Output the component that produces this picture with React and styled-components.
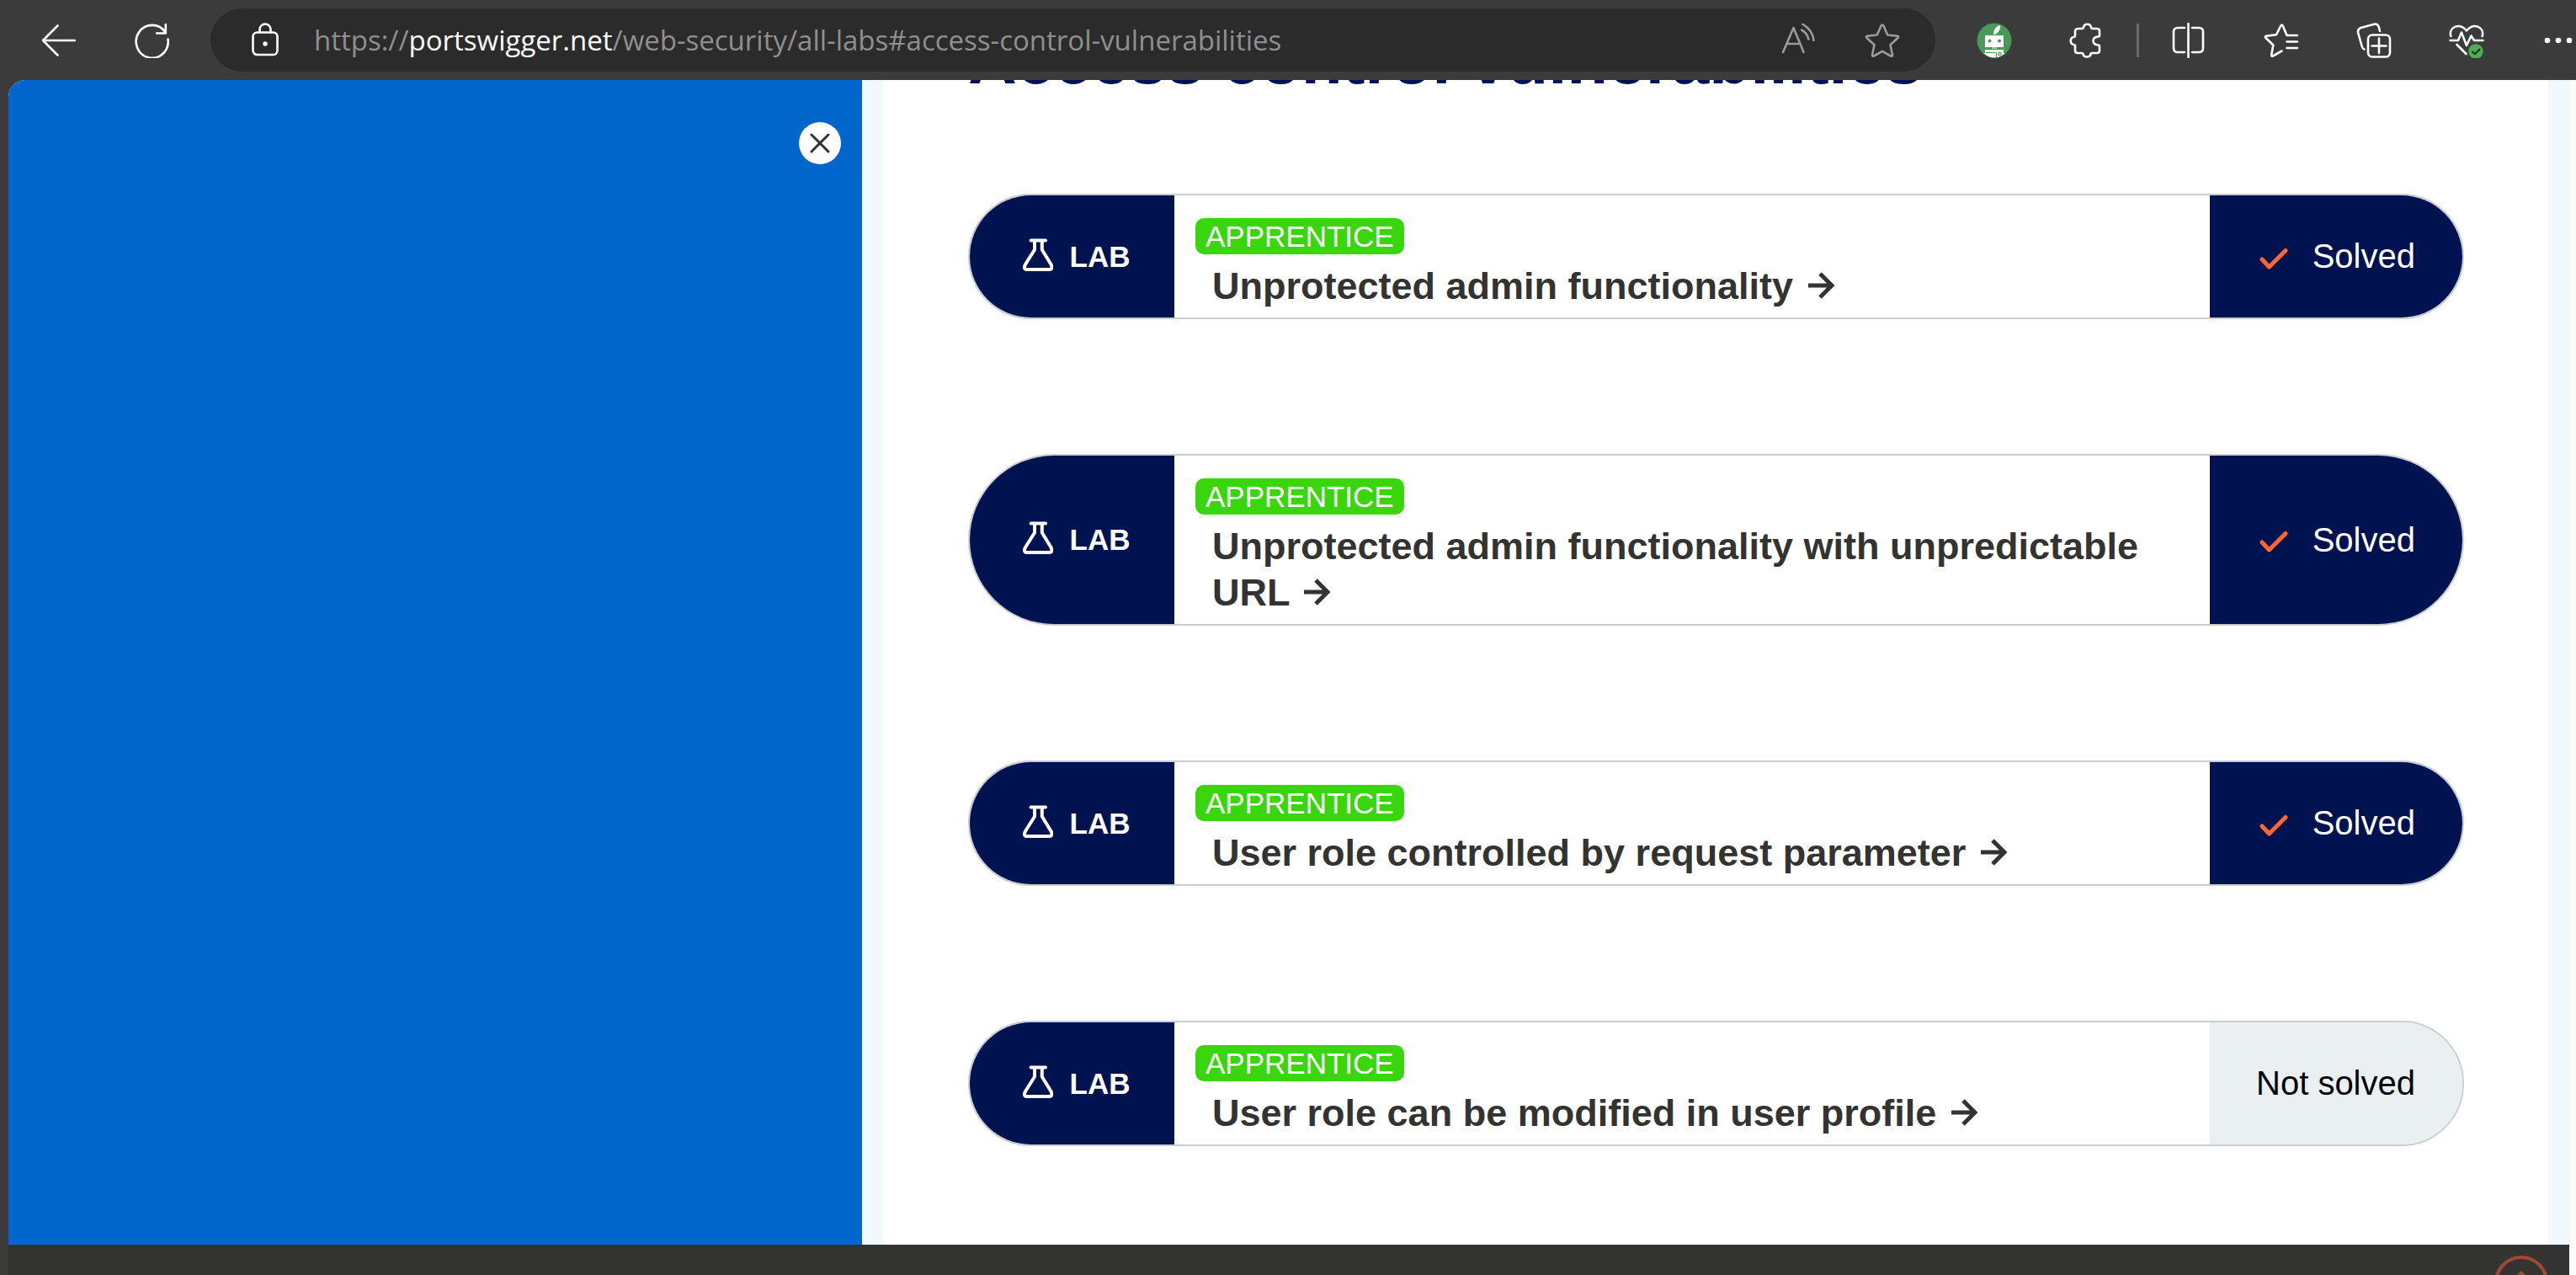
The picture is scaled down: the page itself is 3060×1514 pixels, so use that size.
import React from "react";
import styled, { createGlobalStyle } from "styled-components";

const Global = createGlobalStyle`
  *, *::before, *::after { box-sizing: border-box; }
  html, body, #root { height: 100%; margin: 0; }
  body { background: #3b3b3b; font-family: "Liberation Sans", Arial, sans-serif; overflow: hidden; }
  button, input { font: inherit; color: inherit; border: 0; padding: 0; margin: 0; background: none; }
  h2, h3, ul { margin: 0; padding: 0; list-style: none; }
`;

const Window = styled.div`
  height: 100vh;
  display: flex;
  flex-direction: column;
  overflow: hidden;
`;

const Toolbar = styled.header`
  flex: none;
  display: flex;
  align-items: center;
  padding: 10px 0 10px 15px;
  background: #3b3b3b;
  color: #fff;
`;

const ToolButton = styled.button`
  flex: none;
  width: ${(p) => p.$width || 110}px;
  height: 75px;
  display: flex;
  align-items: center;
  justify-content: ${(p) => (p.$end ? "flex-end" : "center")};
  padding-right: ${(p) => (p.$end ? 4 : 0)}px;
  color: ${(p) => (p.$muted ? "#9a9a9a" : "#fff")};
`;

const Divider = styled.span`
  width: 3px;
  height: 40px;
  margin: 0 4px;
  background: #6b6b6b;
`;

const AddressBar = styled.div`
  flex: 1;
  min-width: 0;
  height: 75px;
  margin: 0 15px;
  padding: 0 13px 0 15px;
  display: flex;
  align-items: center;
  border-radius: 38px;
  background: #2b2b2b;
`;

const Address = styled.a`
  flex: 1;
  min-width: 0;
  display: flex;
  padding-left: 8px;
  white-space: nowrap;
  font-family: "Open Sans", "Noto Sans", sans-serif;
  font-size: 33px;
  line-height: 48px;
  text-decoration: none;
`;

const AddressPart = styled.span`
  color: ${(p) => (p.$host ? "#fff" : "#8f8f8f")};
`;

const Svg = styled.svg`
  display: block;
  flex: none;
  fill: none;
  stroke: currentColor;
  stroke-width: ${(p) => p.$stroke || 2.6};
  stroke-linecap: ${(p) => (p.$sharp ? "butt" : "round")};
  stroke-linejoin: ${(p) => (p.$sharp ? "miter" : "round")};
`;

const Viewport = styled.div`
  flex: 1;
  min-height: 0;
  margin-left: 10px;
  border-right: 8px solid #fbfbfb;
  display: flex;
  flex-direction: column;
  overflow: hidden;
  border-top-left-radius: 20px;
  background: #f0f9fc;
`;

const Content = styled.div`
  flex: 1;
  min-height: 0;
  display: flex;
`;

const SideMenu = styled.aside`
  flex: none;
  width: calc(100% / 3);
  display: flex;
  justify-content: flex-end;
  align-items: flex-start;
  padding: 50px 25px;
  background: #0066cc;
`;

const CloseButton = styled.button`
  width: 50px;
  height: 50px;
  display: flex;
  align-items: center;
  justify-content: center;
  border-radius: 50%;
  background: #fff;
  color: #333332;
`;

const Page = styled.main`
  flex: 1;
  display: flex;
  flex-direction: column;
  justify-content: flex-end;
  min-width: 0;
  margin: 0 25px;
  padding: 0 100px 117px 101px;
  background: #fff;
`;

const Heading = styled.h2`
  margin-bottom: 112px;
  font-size: 80px;
  line-height: 92px;
  color: #00124f;
`;

const LabList = styled.ul`
  display: flex;
  flex-direction: column;
  gap: 160px;
`;

const LabCard = styled.li`
  display: flex;
  border: 2px solid #c8cfcf;
  border-radius: 102px;
  overflow: hidden;
  background: #fff;
`;

const LabType = styled.div`
  flex: none;
  width: 243px;
  display: flex;
  align-items: center;
  justify-content: center;
  gap: 20px;
  padding-left: 10px;
  background: #00124f;
  color: #fff;
  font-size: 35px;
  font-weight: 700;
`;

const LabBody = styled.div`
  flex: 1;
  min-width: 0;
  padding: 27px 25px 10px;
`;

const Level = styled.span`
  display: block;
  width: fit-content;
  padding: 0 12px;
  border-radius: 10px;
  background: #39d60c;
  color: #fff;
  font-size: 35px;
  line-height: 43px;
`;

const LabTitle = styled.h3`
  padding: 10px 20px 0;
  font-size: 45px;
  line-height: 55px;
`;

const LabLink = styled.a`
  color: #333332;
  text-decoration: none;

  svg {
    display: inline-block;
    margin-left: 5px;
  }
`;

const Status = styled.div`
  flex: none;
  width: 300px;
  display: flex;
  align-items: center;
  justify-content: flex-end;
  gap: 29px;
  padding-right: 56px;
  background: ${(p) => (p.$solved ? "#00124f" : "#eaeff2")};
  color: ${(p) => (p.$solved ? "#fff" : "#000")};
  font-size: 40px;
`;

const Footer = styled.footer`
  flex: none;
  height: 36px;
  padding: 13px 25px 0;
  display: flex;
  justify-content: flex-end;
  align-items: flex-start;
  overflow: hidden;
  background: #333332;
`;

const TopButton = styled.button`
  flex: none;
  width: 64px;
  height: 64px;
  display: flex;
  align-items: flex-start;
  justify-content: center;
  padding-top: 14px;
  border: 4px solid #9c4a31;
  border-radius: 50%;
  color: #9c4a31;
`;

const BackIcon = () => (
  <Svg width="42" height="42" viewBox="0 0 42 42" aria-hidden="true">
    <path d="M19.500 3.500 L2 21 L19.500 38.500 M2 21 H40" />
  </Svg>
);

const ReloadIcon = () => (
  <Svg width="42" height="42" viewBox="0 0 42 42" aria-hidden="true">
    <path d="M40.500 19.500 A19 19.500 0 1 1 37.500 11.500 M37.800 2 V12.500 H27" />
  </Svg>
);

const LockIcon = () => (
  <Svg width="32" height="42" viewBox="0 0 32 42" aria-hidden="true">
    <rect x="1.500" y="11.500" width="29" height="26.500" rx="5" />
    <path d="M9.500 11.500 V8 a6.500 6.500 0 0 1 13 0 V11.500" />
    <circle cx="16" cy="25" r="1.400" fill="currentColor" />
  </Svg>
);

const ReadAloudIcon = () => (
  <Svg width="40" height="42" viewBox="0 0 40 42" aria-hidden="true">
    <path d="M2 35 L14.500 6 L26.500 35 M6.500 25 H22.500 M24 8.500 C28 10.500 31 14 32.300 19.500 M25.500 1.800 C32 5.500 37.500 12 38.500 21" />
  </Svg>
);

const StarIcon = () => (
  <Svg width="42" height="42" viewBox="0 0 42 42" aria-hidden="true">
    <path d="M21 2.500 q-1 0 -1.500 1.200 L14.800 14.500 L3 15.800 Q1 16.300 2.500 18 L11.500 26.300 L9 38.200 Q9 40.500 11 39.500 L21 33.800 L31 39.500 Q33 40.500 33 38.200 L30.500 26.300 L39.500 18 Q41 16.300 39 15.800 L27.200 14.500 L22.500 3.700 Q22 2.500 21 2.500 Z" />
  </Svg>
);

const RobotIcon = () => (
  <Svg width="42" height="42" viewBox="0 0 42 42" aria-hidden="true">
    <circle cx="21" cy="21" r="20.500" fill="#48995a" stroke="none" />
    <path d="M20 14 C20 8 23 4 28 3 C29 8 25 12 22 14 Z" fill="#fff" stroke="none" />
    <rect x="10" y="15" width="22" height="14" fill="#fff" stroke="none" />
    <rect x="18" y="29" width="6" height="2" fill="#9acca5" stroke="none" />
    <path d="M8 36 H10 V32 H32 V36 H34 Q28 41.500 21 41.500 Q14 41.500 8 36 Z" fill="#fff" stroke="none" />
    <circle cx="15.500" cy="21.500" r="2" fill="#48995a" stroke="none" />
    <circle cx="27" cy="21.500" r="2" fill="#48995a" stroke="none" />
    <path d="M11 35.500 H22 M23.500 35.500 V41" stroke="#48995a" strokeWidth="1.200" />
    <circle cx="27.500" cy="37" r="1.600" stroke="#48995a" strokeWidth="1.200" />
  </Svg>
);

const PuzzleIcon = () => (
  <Svg width="42" height="42" viewBox="0 0 42 42" aria-hidden="true">
    <path d="M11 7 H15.500 Q17 7 17 5.500 Q17.500 1.800 21.500 1.800 Q25.500 1.800 26 5.500 Q26 7 27.500 7 H33 Q36 7 36 10 V15 Q36 16.500 34.500 16.500 Q28.500 17 28.500 21.500 Q28.500 26 34.500 26.500 Q36 26.500 36 28 V33 Q36 36 33 36 H27 Q25.500 36 25.500 37.500 Q25 40.500 21 40.500 Q17 40.500 16.500 37.500 Q16.500 36 15 36 H10 Q7 36 7 33 V27.500 Q7 26 5.500 26 Q1.800 25.500 1.800 21.500 Q1.800 17.500 5.500 17 Q7 17 7 15.500 V10 Q7 7 11 7 Z" />
  </Svg>
);

const SplitIcon = () => (
  <Svg width="42" height="42" viewBox="0 0 42 42" aria-hidden="true">
    <path d="M16 6 H8 Q3 6 3 11 V30 Q3 35 8 35 H16 M25 6 H33 Q38 6 38 11 V30 Q38 35 33 35 H25 M20.500 1 V41" />
  </Svg>
);

const FavoritesIcon = () => (
  <Svg width="42" height="42" viewBox="0 0 42 42" aria-hidden="true">
    <path d="M40 15 H27.500 L22.800 3.700 Q21.500 1.500 20.200 3.700 L15 14.300 L3 15.800 Q1 16.500 2.500 18 L11.300 26.500 L9.200 38.200 Q9 40.500 11 39.500 L21.500 33.500 M27.500 22.500 H40 M27.500 30 H40" />
  </Svg>
);

const CollectionsIcon = () => (
  <Svg width="42" height="42" viewBox="0 0 42 42" aria-hidden="true">
    <rect x="14" y="14.500" width="26" height="26" rx="5" />
    <path d="M27 18.500 V36 M18.500 27.500 H35.500 M9.500 31.500 Q7.500 31 6.800 28.500 L2.200 12 Q1.200 7.500 5.500 6 L21 1.800 Q25.500 1 26.800 5 L28 10" />
  </Svg>
);

const HealthIcon = () => (
  <Svg width="42" height="42" viewBox="0 0 42 42" aria-hidden="true">
    <path d="M2.300 16 C-0.500 5.500 12 -1 21 9.500 C30 -1 42.500 5.500 39.700 16 M1.500 21 H11 L15 11.500 L21 27 L26.500 15.500 L30 21 H40.500 M9.500 26 L20.500 37" />
    <circle cx="32" cy="34" r="8.700" fill="#4caf50" stroke="none" />
    <path d="M28 34.500 L31 37.300 L36.500 31.500" stroke="#2b2b2b" strokeWidth="2" />
  </Svg>
);

const MoreIcon = () => (
  <Svg width="34" height="8" viewBox="0 0 34 8" aria-hidden="true">
    <g fill="currentColor" stroke="none">
      <circle cx="4" cy="4" r="3.300" />
      <circle cx="17" cy="4" r="3.300" />
      <circle cx="30" cy="4" r="3.300" />
    </g>
  </Svg>
);

const FlaskIcon = () => (
  <Svg width="36" height="44" viewBox="0 0 36 44" $stroke={4} aria-hidden="true">
    <path d="M9.500 2.500 H27 M14 3 V13.500 L3 31 C1 35 2 37 5 37 H31.500 C34.500 37 35.500 35 33.500 31 L22.800 13.500 V3" />
  </Svg>
);

const CheckIcon = () => (
  <Svg width="34" height="30" viewBox="0 0 34 30" $stroke={5} aria-hidden="true">
    <path d="M3 18 L11.500 27 L31 7.500" stroke="#ff6633" />
  </Svg>
);

const ArrowIcon = () => (
  <Svg width="32" height="32" viewBox="0 0 32 32" $stroke={5} $sharp aria-hidden="true">
    <path d="M0 16 H27 M14 2 L28 16 L14 30" />
  </Svg>
);

const CloseIcon = () => (
  <Svg width="24" height="24" viewBox="0 0 24 24" $stroke={3} aria-hidden="true">
    <path d="M2 2 L22 22 M22 2 L2 22" />
  </Svg>
);

const labs = [
  { title: "Unprotected admin functionality", solved: true },
  { title: "Unprotected admin functionality with unpredictable URL", solved: true },
  { title: "User role controlled by request parameter", solved: true },
  { title: "User role can be modified in user profile", solved: false },
];

const tools = [
  { label: "Split screen", Icon: SplitIcon },
  { label: "Favorites", Icon: FavoritesIcon },
  { label: "Collections", Icon: CollectionsIcon },
  { label: "Browser essentials", Icon: HealthIcon },
];

function BrowserToolbar() {
  return (
    <Toolbar>
      <ToolButton aria-label="Back"><BackIcon /></ToolButton>
      <ToolButton aria-label="Refresh"><ReloadIcon /></ToolButton>
      <AddressBar>
        <ToolButton $width={100} aria-label="View site information"><LockIcon /></ToolButton>
        <Address href="#access-control-vulnerabilities">
          <AddressPart>https://</AddressPart>
          <AddressPart $host>portswigger.net</AddressPart>
          <AddressPart>/web-security/all-labs#access-control-vulnerabilities</AddressPart>
        </Address>
        <ToolButton $width={100} $muted aria-label="Read aloud"><ReadAloudIcon /></ToolButton>
        <ToolButton $width={100} $muted aria-label="Add to favorites"><StarIcon /></ToolButton>
      </AddressBar>
      <ToolButton aria-label="Robot extension"><RobotIcon /></ToolButton>
      <ToolButton aria-label="Extensions"><PuzzleIcon /></ToolButton>
      <Divider />
      {tools.map(({ label, Icon }) => (
        <ToolButton key={label} aria-label={label}><Icon /></ToolButton>
      ))}
      <ToolButton $width={75} $end aria-label="More"><MoreIcon /></ToolButton>
    </Toolbar>
  );
}

function Lab({ title, solved }) {
  return (
    <LabCard>
      <LabType><FlaskIcon />LAB</LabType>
      <LabBody>
        <Level>APPRENTICE</Level>
        <LabTitle>
          <LabLink href="#lab">{title} <ArrowIcon /></LabLink>
        </LabTitle>
      </LabBody>
      <Status $solved={solved}>
        {solved && <CheckIcon />}
        {solved ? "Solved" : "Not solved"}
      </Status>
    </LabCard>
  );
}

export default function App() {
  return (
    <Window>
      <Global />
      <BrowserToolbar />
      <Viewport>
        <Content>
          <SideMenu>
            <CloseButton aria-label="Close menu"><CloseIcon /></CloseButton>
          </SideMenu>
          <Page>
            <Heading id="access-control-vulnerabilities">Access control vulnerabilities</Heading>
            <LabList>
              {labs.map((lab) => <Lab key={lab.title} {...lab} />)}
            </LabList>
          </Page>
        </Content>
        <Footer>
          <TopButton aria-label="Back to top">
            <Svg width="28" height="18" viewBox="0 0 28 18" $stroke={6} $sharp aria-hidden="true">
              <path d="M2 16 L14 4 L26 16" />
            </Svg>
          </TopButton>
        </Footer>
      </Viewport>
    </Window>
  );
}
